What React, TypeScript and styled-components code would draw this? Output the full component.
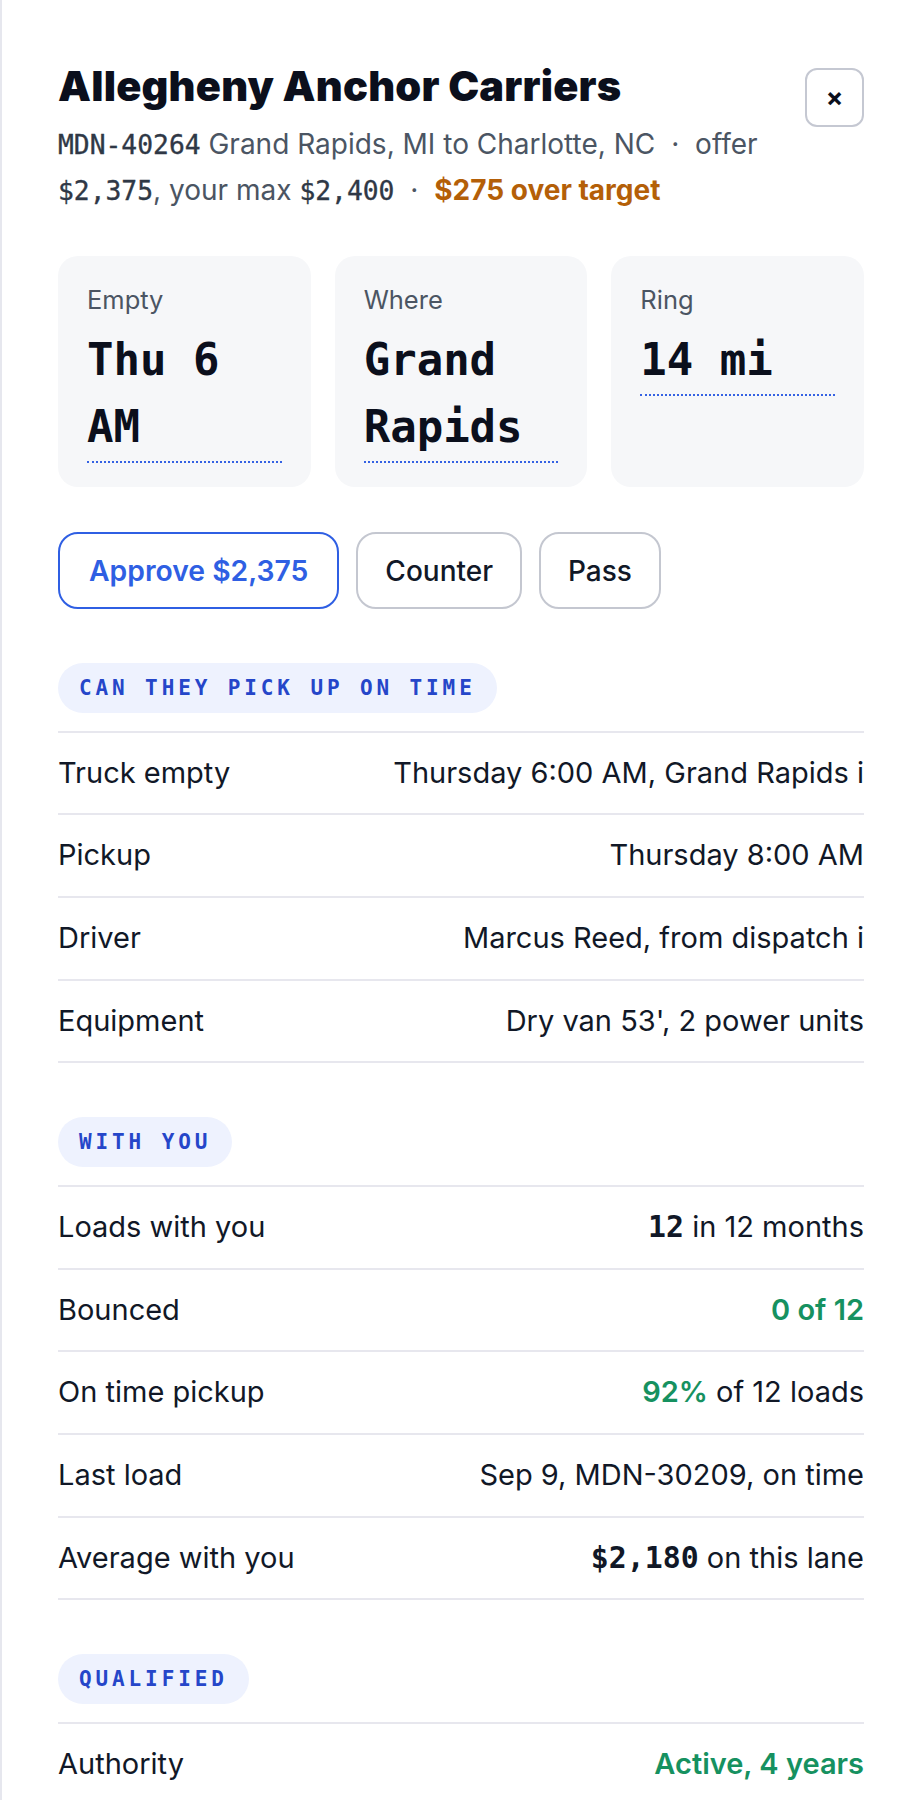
import React from "react";
import styled, { createGlobalStyle } from "styled-components";

const MONO = `"DejaVu Sans Mono", "Liberation Mono", monospace`;

const GlobalStyle = createGlobalStyle`
  html, body { margin: 0; padding: 0; background: #ffffff; }
  body {
    font-family: Inter, "Noto Sans", "Liberation Sans", sans-serif;
    color: #111827;
  }
  * { box-sizing: border-box; }
`;

const Panel = styled.aside`
  min-height: 1800px;
  border-left: 2px solid #e6e7ee;
  padding: 62px 56px 80px 56px;
  display: flex;
  flex-direction: column;
`;

const Header = styled.header`
  display: flex;
  justify-content: space-between;
  align-items: flex-start;
  gap: 24px;
`;

const HeadText = styled.div`
  flex: 1;
  min-width: 0;
`;

const Title = styled.h1`
  margin: 0;
  font-size: 41.5px;
  line-height: 48px;
  font-weight: 900;
  letter-spacing: 0.005em;
  color: #0b0f1c;
`;

const Sub = styled.p`
  margin: 12px 0 0;
  font-size: 28px;
  line-height: 45px;
  color: #4b5563;
`;

const Mono = styled.span`
  font-family: ${MONO};
  font-size: 0.94em;
  font-weight: 400;
  color: #2f3846;
  -webkit-text-stroke: 0.35px #2f3846;
`;

const StrongMono = styled.span`
  font-family: ${MONO};
  font-size: 1.03em;
  font-weight: 700;
  color: #111827;
`;

const Sep = styled.span`
  margin: 0 8px;
  color: #4b5563;
`;

const Warn = styled.span`
  color: #b45f08;
  font-weight: 700;
`;

const CloseButton = styled.button`
  flex: none;
  margin-top: 6px;
  width: 59px;
  height: 59px;
  border: 2px solid #c5c8d2;
  border-radius: 12px;
  background: #ffffff;
  display: flex;
  align-items: center;
  justify-content: center;
  font-family: Inter, sans-serif;
  font-size: 26px;
  font-weight: 700;
  color: #0b0f1c;
  padding: 0;
`;

const Cards = styled.div`
  margin-top: 42px;
  display: grid;
  grid-template-columns: repeat(3, 1fr);
  gap: 24px;
`;

const Card = styled.div`
  background: #f6f7f9;
  border-radius: 20px;
  padding: 27px 29px 24px;
`;

const CardLabel = styled.div`
  font-size: 25.5px;
  line-height: 34px;
  color: #4b5563;
`;

const CardValue = styled.div`
  margin-top: 9px;
  padding-bottom: 1px;
  font-family: ${MONO};
  font-weight: 700;
  font-size: 44px;
  line-height: 67px;
  color: #0b0f1c;
  border-bottom: 2px dotted #3562e3;
`;

const Actions = styled.div`
  margin-top: 45px;
  display: flex;
  gap: 17px;
`;

const Button = styled.button<{ $primary?: boolean }>`
  height: 77px;
  padding: 0 ${(p) => (p.$primary ? 29 : 27)}px;
  border-radius: 20px;
  background: #ffffff;
  border: 2px solid ${(p) => (p.$primary ? "#2f5fe3" : "#c4c7d0")};
  color: ${(p) => (p.$primary ? "#2f5fe3" : "#111827")};
  font-family: Inter, sans-serif;
  font-size: ${(p) => (p.$primary ? 28.3 : 28)}px;
  font-weight: ${(p) => (p.$primary ? 600 : 500)};
`;

const Section = styled.section`
  margin-top: 54px;
  display: flex;
  flex-direction: column;
  align-items: flex-start;
`;

const Tag = styled.h2`
  margin: 0;
  padding: 12.5px 21px;
  border-radius: 999px;
  background: #eef2fe;
  color: #2546c9;
  font-family: ${MONO};
  font-weight: 700;
  font-size: 21px;
  line-height: 25px;
  letter-spacing: 0.185em;
  text-transform: uppercase;
`;

const List = styled.dl`
  margin: 17.5px 0 0;
  width: 100%;
  border-top: 2px solid #e7e7ee;
`;

const Row = styled.div`
  display: flex;
  justify-content: space-between;
  align-items: center;
  gap: 24px;
  padding: 20px 0;
  border-bottom: 2px solid #e7e7ee;
  font-size: 29px;
  line-height: 40.7px;
`;

const Key = styled.dt`
  margin: 0;
  color: #111827;
`;

const Val = styled.dd`
  margin: 0;
  color: #111827;
  text-align: right;
  white-space: nowrap;
`;

const Good = styled.span`
  color: #169160;
  font-weight: 600;
`;

type RowData = { k: string; v: React.ReactNode };

const pickup: RowData[] = [
  { k: "Truck empty", v: "Thursday 6:00 AM, Grand Rapids i" },
  { k: "Pickup", v: "Thursday 8:00 AM" },
  { k: "Driver", v: "Marcus Reed, from dispatch i" },
  { k: "Equipment", v: "Dry van 53', 2 power units" },
];

const withYou: RowData[] = [
  { k: "Loads with you", v: <><StrongMono>12</StrongMono> in 12 months</> },
  { k: "Bounced", v: <Good>0 of 12</Good> },
  { k: "On time pickup", v: <><Good>92%</Good> of 12 loads</> },
  { k: "Last load", v: "Sep 9, MDN-30209, on time" },
  { k: "Average with you", v: <><StrongMono>$2,180</StrongMono> on this lane</> },
];

const qualified: RowData[] = [
  { k: "Authority", v: <Good>Active, 4 years</Good> },
  { k: "Insurance", v: "$1M auto, $100K cargo" },
  { k: "Safety rating", v: "Satisfactory" },
];

function Block({ title, rows }: { title: string; rows: RowData[] }) {
  return (
    <Section>
      <Tag>{title}</Tag>
      <List>
        {rows.map((r) => (
          <Row key={r.k}>
            <Key>{r.k}</Key>
            <Val>{r.v}</Val>
          </Row>
        ))}
      </List>
    </Section>
  );
}

export default function App() {
  return (
    <>
      <GlobalStyle />
      <Panel>
        <Header>
          <HeadText>
            <Title>Allegheny Anchor Carriers</Title>
            <Sub>
              <Mono>MDN-40264</Mono> Grand Rapids, MI to Charlotte, NC <Sep>·</Sep> offer{" "}
              <Mono>$2,375</Mono>, your max <Mono>$2,400</Mono> <Sep>·</Sep>{" "}
              <Warn>$275 over target</Warn>
            </Sub>
          </HeadText>
          <CloseButton aria-label="Close">×</CloseButton>
        </Header>

        <Cards>
          <Card>
            <CardLabel>Empty</CardLabel>
            <CardValue>Thu 6 AM</CardValue>
          </Card>
          <Card>
            <CardLabel>Where</CardLabel>
            <CardValue>Grand Rapids</CardValue>
          </Card>
          <Card>
            <CardLabel>Ring</CardLabel>
            <CardValue>14 mi</CardValue>
          </Card>
        </Cards>

        <Actions>
          <Button $primary>Approve $2,375</Button>
          <Button>Counter</Button>
          <Button>Pass</Button>
        </Actions>

        <Block title="Can they pick up on time" rows={pickup} />
        <Block title="With you" rows={withYou} />
        <Block title="Qualified" rows={qualified} />
      </Panel>
    </>
  );
}
